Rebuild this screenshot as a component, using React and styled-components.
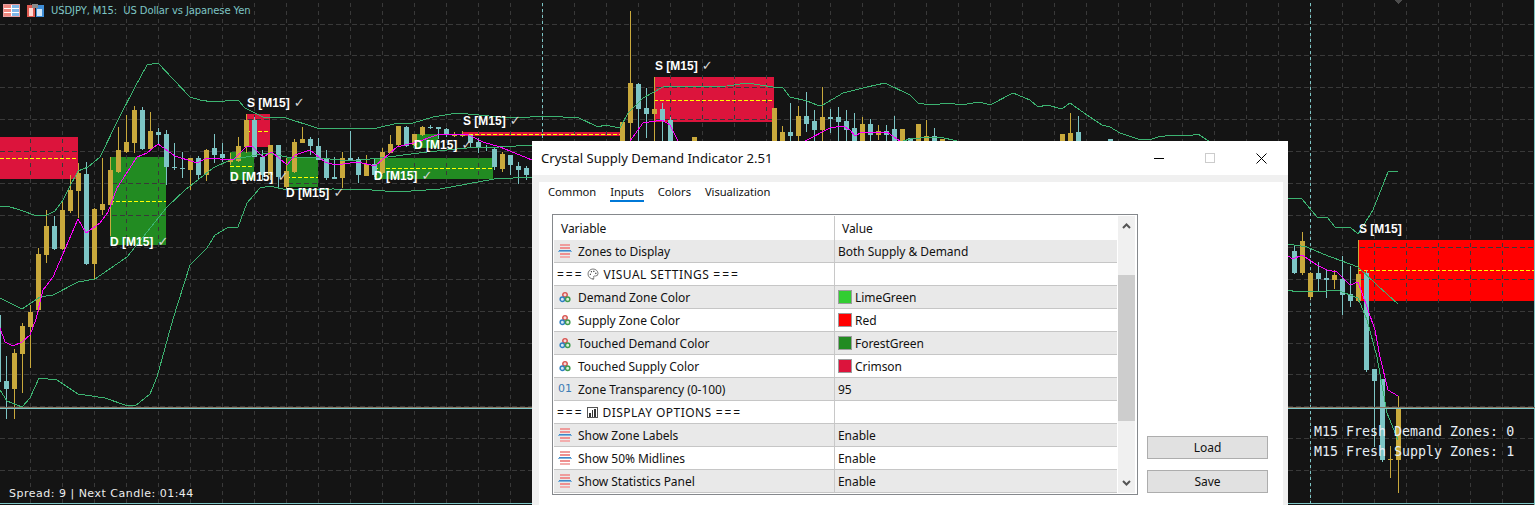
import React from "react";
import styled, {createGlobalStyle} from "styled-components";
import {Palette} from "lucide-react";

const GOLD = "#c9a93c";
const TEAL = "#7dc5c5";

const GRID_X = Array.from({length: 48}, (_, i) => 30 + i * 32);
const GRID_Y = [24, 55, 87, 119, 151, 183, 215, 247, 279, 311, 343, 374, 406, 438, 470];

// x, y, width, height, colour; the dashed midline sits at mid
const ZONES = [
  {x: 0, y: 137, w: 78, h: 42, mid: 158, c: "#dc143c"},
  {x: 110, y: 157, w: 56, h: 88, mid: 201, c: "#228b22"},
  {x: 246, y: 114, w: 24, h: 33, mid: 131, c: "#dc143c"},
  {x: 230, y: 152, w: 24, h: 28, mid: 166, c: "#228b22"},
  {x: 286, y: 157, w: 32, h: 30, mid: 177, c: "#228b22"},
  {x: 374, y: 158, w: 119, h: 21, mid: 168, c: "#228b22"},
  {x: 413, y: 134, w: 25, h: 14, c: "#228b22"},
  {x: 463, y: 132, w: 159, h: 4, mid: 134, c: "#dc143c"},
  {x: 654, y: 77, w: 120, h: 45, mid: 100, c: "#dc143c"},
  {x: 1358, y: 240, w: 177, h: 61, mid: 270, c: "#ff0000"},
];

// x, g(old) or t(eal), wick top, body top, body bottom, wick bottom
const CANDLES = [
  [-2, "t", 315, 315, 382, 382], [6, "t", 356, 381, 389, 419], [14, "g", 349, 353, 389, 419],
  [22, "g", 323, 326, 354, 393], [30, "g", 305, 312, 327, 368], [38, "g", 248, 254, 310, 312],
  [46, "g", 210, 226, 255, 263], [54, "t", 216, 226, 249, 250], [62, "g", 200, 210, 249, 250],
  [70, "g", 175, 190, 211, 213], [78, "g", 163, 173, 191, 218], [86, "t", 162, 174, 264, 265],
  [94, "g", 208, 209, 264, 279], [102, "g", 158, 204, 210, 215], [110, "g", 157, 170, 205, 236],
  [118, "g", 127, 150, 172, 173], [126, "g", 115, 142, 152, 153], [134, "g", 106, 110, 143, 153],
  [142, "t", 107, 110, 149, 150], [150, "g", 112, 131, 149, 150], [158, "t", 128, 132, 135, 145],
  [166, "t", 130, 134, 167, 185], [174, "t", 143, 167, 168, 170], [182, "t", 152, 168, 169, 178],
  [190, "g", 158, 158, 170, 190], [198, "t", 156, 158, 175, 180], [206, "g", 149, 150, 175, 181],
  [214, "t", 134, 148, 155, 163], [222, "t", 143, 154, 158, 162], [230, "g", 153, 159, 162, 165],
  [238, "g", 137, 146, 161, 162], [246, "g", 114, 120, 147, 153], [254, "t", 117, 120, 157, 157],
  [262, "t", 150, 157, 175, 180], [270, "g", 145, 145, 175, 180], [278, "t", 145, 145, 177, 188],
  [286, "g", 158, 171, 187, 190], [294, "g", 139, 142, 172, 173], [302, "g", 127, 139, 143, 143],
  [310, "t", 137, 139, 146, 155], [318, "t", 138, 146, 160, 160], [326, "t", 150, 158, 178, 180],
  [334, "t", 157, 177, 179, 179], [342, "g", 152, 158, 178, 188], [350, "t", 131, 158, 160, 161],
  [358, "t", 157, 159, 175, 183], [366, "g", 155, 164, 176, 176], [374, "t", 158, 164, 175, 177],
  [382, "g", 148, 152, 173, 174], [390, "g", 135, 144, 153, 153], [398, "g", 126, 126, 145, 147],
  [406, "t", 126, 127, 146, 147], [414, "g", 134, 134, 145, 146], [422, "g", 126, 127, 135, 136],
  [430, "t", 125, 127, 128, 129], [438, "t", 127, 127, 129, 139], [446, "t", 128, 129, 135, 137],
  [454, "g", 132, 134, 136, 137], [462, "g", 131, 134, 136, 137], [470, "t", 135, 135, 143, 148],
  [478, "t", 138, 142, 147, 153], [486, "t", 145, 147, 148, 151], [494, "t", 148, 149, 167, 170],
  [502, "g", 152, 154, 169, 172], [510, "t", 155, 155, 165, 175], [518, "t", 162, 166, 170, 184],
  [526, "t", 166, 168, 175, 180],
  [622, "g", 122, 122, 150, 150], [630, "g", 11, 83, 123, 150], [638, "t", 83, 84, 109, 150],
  [646, "t", 88, 108, 114, 138], [654, "g", 77, 109, 114, 150], [662, "t", 103, 109, 121, 150],
  [670, "t", 117, 120, 150, 150], [694, "g", 137, 137, 150, 150], [774, "g", 108, 108, 150, 150],
  [782, "g", 126, 132, 150, 150], [790, "t", 103, 132, 136, 150], [798, "g", 106, 116, 136, 150],
  [806, "t", 92, 116, 124, 132], [814, "t", 110, 121, 130, 150], [822, "g", 87, 117, 130, 150],
  [830, "t", 109, 117, 119, 133], [838, "t", 107, 117, 122, 150], [846, "t", 110, 121, 130, 150],
  [854, "t", 113, 128, 150, 150], [862, "g", 117, 124, 150, 150], [870, "t", 119, 124, 135, 150],
  [878, "g", 125, 131, 135, 140], [886, "t", 125, 131, 135, 150], [894, "t", 116, 129, 150, 150],
  [902, "g", 129, 129, 150, 150], [910, "t", 138, 138, 150, 150], [918, "g", 124, 124, 150, 150],
  [926, "g", 120, 136, 150, 150], [934, "t", 128, 136, 150, 150], [942, "g", 139, 139, 150, 150],
  [1062, "g", 134, 134, 150, 150], [1070, "g", 113, 133, 150, 150], [1078, "t", 116, 132, 150, 150],
  [1110, "t", 139, 139, 150, 150],
  [1294, "t", 245, 251, 273, 274], [1302, "g", 232, 241, 273, 275], [1310, "g", 272, 273, 297, 299],
  [1318, "t", 262, 273, 279, 292], [1326, "t", 270, 278, 280, 298], [1334, "g", 270, 275, 280, 289],
  [1342, "t", 256, 279, 295, 315], [1350, "t", 266, 294, 301, 307], [1358, "g", 240, 274, 301, 302],
  [1366, "t", 270, 273, 370, 372], [1374, "t", 369, 369, 381, 447], [1382, "t", 379, 379, 460, 462],
  [1390, "g", 446, 459, 460, 478], [1398, "g", 396, 408, 460, 493],
];

const BANDS = [
  "0,207 7,206 20,210 37,216 47,215 55,211 63,200 68,190 78,171 88,167 100,157 118,120 135,87 147,65 158,63 190,97 200,100 213,102 238,100 245,108 263,117 283,117 317,128 377,128 398,123 413,123 433,117 457,113 500,117 530,117 550,116 563,117 577,117 598,127 605,125 620,128 628,113 643,98 663,87 727,86 747,83 773,87 783,88 790,97 807,101 817,105 823,105 843,93 867,87 885,83 910,95 918,103 930,105 950,103 960,105 980,102 990,105 1013,93 1030,100 1038,107 1047,105 1062,109 1070,103 1087,115 1102,125 1110,127 1120,133 1138,139 1152,139 1158,137 1173,135 1193,135 1198,134 1207,140 1215,145",
  "1288,198 1302,199 1317,217 1327,217 1335,227 1350,227 1358,234 1373,210 1388,172 1398,171",
  "0,298 22,309 40,297 53,295 78,282 95,279 127,257 167,207 185,190 213,168 230,160 267,153 287,157 320,158 350,161 380,158 427,152 467,148 500,147 532,145",
  "903,141 910,139 930,137 940,137 957,141",
  "1288,244 1307,247 1323,254 1358,267 1377,285 1398,304",
  "0,390 7,401 22,407 30,398 39,378 57,380 78,394 105,398 125,405 135,406 150,394 157,377 173,319 190,265 207,248 215,235 227,228 238,227 247,203 260,188 270,186 287,190 333,189 372,190 397,192 440,189 494,179 532,177",
  "1288,290 1297,292 1327,291 1337,290 1358,298 1367,320 1377,357 1387,413 1398,440",
];

const AVERAGES = [
  "0,328 5,342 13,346 22,342 30,335 36,319 43,290 53,277 78,219 86,233 100,223 108,212 117,188 137,157 147,153 158,144 175,156 197,163 207,158 233,160 247,146 253,147 263,157 272,152 287,165 295,155 310,150 325,162 335,165 358,162 375,166 397,147 417,142 437,135 467,134 483,142 500,147 532,160",
  "630,141 643,123 662,120 670,125 678,141",
  "805,141 830,128 843,126 850,130 855,136 862,132 887,132 900,141",
  "1288,256 1293,259 1302,255 1317,265 1327,270 1337,272 1350,285 1358,282 1367,307 1375,330 1380,357 1388,390 1398,396",
];

const ZONE_LABELS = [
  {x: 247, y: 96, text: "S [M15]", tick: true},
  {x: 463, y: 114, text: "S [M15]", tick: true},
  {x: 655, y: 59, text: "S [M15]", tick: true},
  {x: 110, y: 235, text: "D [M15]", tick: true},
  {x: 230, y: 170, text: "D [M15]", tick: true},
  {x: 286, y: 186, text: "D [M15]", tick: true},
  {x: 374, y: 169, text: "D [M15]", tick: true},
  {x: 414, y: 138, text: "D [M15]", tick: true},
  {x: 1359, y: 222, text: "S [M15]"},
];

const INPUTS = [
  {icon: "enum", name: "Zones to Display", value: "Both Supply & Demand"},
  {section: "VISUAL SETTINGS", glyph: "palette"},
  {icon: "color", name: "Demand Zone Color", value: "LimeGreen", swatch: "#32cd32"},
  {icon: "color", name: "Supply Zone Color", value: "Red", swatch: "#ff0000"},
  {icon: "color", name: "Touched Demand Color", value: "ForestGreen", swatch: "#228b22"},
  {icon: "color", name: "Touched Supply Color", value: "Crimson", swatch: "#dc143c"},
  {icon: "number", name: "Zone Transparency (0-100)", value: "95"},
  {section: "DISPLAY OPTIONS", glyph: "bars"},
  {icon: "enum", name: "Show Zone Labels", value: "Enable"},
  {icon: "enum", name: "Show 50% Midlines", value: "Enable"},
  {icon: "enum", name: "Show Statistics Panel", value: "Enable"},
];

function ChartDrawing() {
  return (
    <ChartSvg width="1535" height="505" viewBox="0 0 1535 505">
      <g shapeRendering="crispEdges">
        {ZONES.map((z) => (
          <rect key={`${z.x}-${z.y}`} x={z.x} y={z.y} width={z.w} height={z.h} fill={z.c} />
        ))}
        {GRID_X.map((x) => (
          <line key={x} x1={x + 0.5} x2={x + 0.5} y1="3" y2="503" stroke="#393939" strokeDasharray="4 4" />
        ))}
        {GRID_Y.map((y) => (
          <line key={y} x1="0" x2="1535" y1={y + 0.5} y2={y + 0.5} stroke="#393939" strokeDasharray="5 3" />
        ))}
        {ZONES.filter((z) => z.mid).map((z) => (
          <line
            key={z.x}
            x1={z.x}
            x2={z.x + z.w}
            y1={z.mid + 0.5}
            y2={z.mid + 0.5}
            stroke="#ffff00"
            strokeDasharray="4 2"
          />
        ))}
        <line x1="542.5" x2="542.5" y1="3" y2="503" stroke={TEAL} strokeDasharray="3 3" />
        <line x1="1310.5" x2="1310.5" y1="3" y2="503" stroke={TEAL} strokeDasharray="3 3" />
        <line x1="1534.5" x2="1534.5" y1="0" y2="505" stroke={TEAL} />
        {CANDLES.map(([x, kind, wickTop, top, bottom, wickBottom]) => {
          const colour = kind === "g" ? GOLD : TEAL;
          return (
            <g key={x} fill={colour}>
              <rect x={x} y={wickTop} width="1" height={wickBottom - wickTop} />
              <rect x={x - 2} y={top} width="5" height={Math.max(bottom - top, 1)} />
            </g>
          );
        })}
        {BANDS.map((points) => (
          <polyline key={points} points={points} fill="none" stroke="#3cb371" />
        ))}
        {AVERAGES.map((points) => (
          <polyline key={points} points={points} fill="none" stroke="#ff00ff" />
        ))}
        <rect x="0" y="407" width="1535" height="1" fill="#8a7560" />
        <rect x="0" y="408" width="1535" height="1" fill={TEAL} />
        <rect x="0" y="503" width="1535" height="1" fill={TEAL} />
        <path d="M1394 0h8l-4 4z" fill="#4d4d4d" />
      </g>
    </ChartSvg>
  );
}

function TableIcon() {
  return (
    <svg width="17" height="13" viewBox="0 0 17 13" shapeRendering="crispEdges">
      <rect x="0.5" y="0.5" width="16" height="12" fill="#fff" stroke="#e8a0a0" />
      <rect x="1" y="1" width="7" height="11" fill="#f08a80" />
      <rect x="9" y="1" width="7" height="11" fill="#7fb8e8" />
      <path d="M1 4.5h15M1 8.5h15M8.5 1v11" stroke="#fff" />
    </svg>
  );
}

function SaveIcon() {
  return (
    <svg width="17" height="13" viewBox="0 0 17 13" shapeRendering="crispEdges">
      <rect x="0" y="1" width="8" height="12" fill="#e05a50" />
      <rect x="2" y="4" width="4" height="8" fill="#ffd9d2" />
      <rect x="9" y="1" width="8" height="12" fill="#3f8fd8" />
      <rect x="10" y="5" width="5" height="7" fill="#cfe6f8" />
      <rect x="5" y="0" width="6" height="4" fill="#8a8a8a" />
    </svg>
  );
}

function EnumIcon() {
  return (
    <svg width="14" height="14" viewBox="0 0 14 14" shapeRendering="crispEdges">
      <rect x="2" y="0" width="10" height="2" fill="#ee9c9c" />
      <rect x="2" y="3" width="10" height="2" fill="#ef8f8f" />
      <rect x="1" y="6" width="12" height="2" fill="#3d87c7" />
      <rect x="0" y="7" width="14" height="1" fill="#7fb3dc" />
      <rect x="2" y="9" width="10" height="2" fill="#ef8f8f" />
      <rect x="2" y="12" width="10" height="2" fill="#f2adad" />
    </svg>
  );
}

function ColorIcon() {
  return (
    <svg width="12" height="12" viewBox="0 0 14 14">
      <circle cx="7" cy="4.5" r="2.6" fill="#f6dada" stroke="#d9534f" strokeWidth="1.7" />
      <circle cx="3.9" cy="9.6" r="2.6" fill="#d8e8f5" stroke="#2f7fc1" strokeWidth="1.7" />
      <circle cx="10.1" cy="9.6" r="2.6" fill="#dcefdc" stroke="#3f9a4f" strokeWidth="1.7" />
    </svg>
  );
}

function BarsGlyph() {
  return (
    <svg width="11" height="11" viewBox="0 0 11 11" shapeRendering="crispEdges">
      <rect x="0.5" y="0.5" width="10" height="10" fill="none" stroke="#555" />
      <rect x="2" y="6" width="2" height="4" fill="#333" />
      <rect x="5" y="3" width="1" height="7" fill="#333" />
      <rect x="7" y="2" width="2" height="8" fill="#333" />
    </svg>
  );
}

function RowIcon({kind}) {
  if (kind === "enum") return <EnumIcon />;
  if (kind === "color") return <ColorIcon />;
  return <NumberMark>01</NumberMark>;
}

function InputRow({input, index}) {
  if (input.section) {
    return (
      <Row $shaded={index % 2 === 0}>
        <NameCell $section>
          <Rule>===</Rule>
          <Glyph>{input.glyph === "palette" ? <Palette size={12} strokeWidth={1.3} color="#333" /> : <BarsGlyph />}</Glyph>
          <SectionName>{input.section}</SectionName>
          <Rule>===</Rule>
        </NameCell>
        <ValueCell />
      </Row>
    );
  }
  return (
    <Row $shaded={index % 2 === 0}>
      <NameCell>
        <IconSlot>
          <RowIcon kind={input.icon} />
        </IconSlot>
        {input.name}
      </NameCell>
      <ValueCell>
        {input.swatch && <Swatch $colour={input.swatch} />}
        {input.value}
      </ValueCell>
    </Row>
  );
}

export default function App() {
  return (
    <>
      <GlobalStyle />
      <Terminal>
        <ChartDrawing />
        <ChartTitle>
          <TableIcon />
          <SaveIcon />
          <SymbolName>{"USDJPY, M15:  US Dollar vs Japanese Yen"}</SymbolName>
        </ChartTitle>
        {ZONE_LABELS.map((label) => (
          <ZoneLabel key={`${label.x}-${label.y}`} $x={label.x} $y={label.y}>
            {label.text}
            {label.tick && <Tick> ✓</Tick>}
          </ZoneLabel>
        ))}
        <SpreadInfo>Spread: 9 | Next Candle: 01:44</SpreadInfo>
        <Stats>
          <div>M15 Fresh Demand Zones: 0</div>
          <div>M15 Fresh Supply Zones: 1</div>
        </Stats>

        <Dialog>
          <TitleBar>
            <DialogTitle>Crystal Supply Demand Indicator 2.51</DialogTitle>
            <WindowControls>
              <svg width="10" height="10" viewBox="0 0 10 10" shapeRendering="crispEdges">
                <path d="M0 5.5h10" stroke="#000" />
              </svg>
              <svg width="10" height="10" viewBox="0 0 10 10" shapeRendering="crispEdges">
                <rect x="0.5" y="0.5" width="9" height="9" fill="none" stroke="#ccc" />
              </svg>
              <svg width="11" height="11" viewBox="0 0 11 11">
                <path d="M0.5 0.5l10 10M10.5 0.5l-10 10" stroke="#000" strokeWidth="1" />
              </svg>
            </WindowControls>
          </TitleBar>
          <DialogBody>
            <Pane>
              <Tabs>
                <Tab>Common</Tab>
                <Tab $active>Inputs</Tab>
                <Tab>Colors</Tab>
                <Tab>Visualization</Tab>
              </Tabs>
              <Content>
                <InputTable>
                  <Rows>
                    <HeaderRow>
                      <HeaderCell>Variable</HeaderCell>
                      <HeaderCell>Value</HeaderCell>
                    </HeaderRow>
                    {INPUTS.map((input, index) => (
                      <InputRow key={input.name || input.section} input={input} index={index} />
                    ))}
                  </Rows>
                  <Scrollbar>
                    <ScrollArrow>
                      <svg width="9" height="6" viewBox="0 0 9 6">
                        <path d="M1 5l3.5-3.5L8 5" fill="none" stroke="#555" strokeWidth="2" />
                      </svg>
                    </ScrollArrow>
                    <ScrollThumb />
                    <ScrollArrow $end>
                      <svg width="9" height="6" viewBox="0 0 9 6">
                        <path d="M1 1l3.5 3.5L8 1" fill="none" stroke="#555" strokeWidth="2" />
                      </svg>
                    </ScrollArrow>
                  </Scrollbar>
                </InputTable>
                <SideButtons>
                  <DialogButton>Load</DialogButton>
                  <DialogButton>Save</DialogButton>
                </SideButtons>
              </Content>
            </Pane>
          </DialogBody>
        </Dialog>
      </Terminal>
    </>
  );
}

const GlobalStyle = createGlobalStyle`
  html, body {
    margin: 0;
    padding: 0;
    background: #141414;
  }
`;

const Terminal = styled.div`
  position: relative;
  width: 1535px;
  height: 505px;
  overflow: hidden;
  background: #141414;
`;

const ChartSvg = styled.svg`
  position: absolute;
  top: 0;
  left: 0;
  display: block;
`;

const ChartTitle = styled.div`
  position: absolute;
  top: 3px;
  left: 3px;
  display: flex;
  align-items: center;
  gap: 7px;
  height: 14px;
`;

const SymbolName = styled.span`
  padding-top: 1px;
  font: 10px "DejaVu Sans", sans-serif;
  letter-spacing: -0.1px;
  color: ${TEAL};
  white-space: pre;
`;

const ZoneLabel = styled.span`
  position: absolute;
  left: ${(p) => p.$x}px;
  top: ${(p) => p.$y}px;
  font: bold 12px/14px "Liberation Sans", sans-serif;
  color: #fff;
  white-space: pre;
`;

const Tick = styled.span`
  font: 13px/14px "DejaVu Sans", sans-serif;
  color: #d8d8d8;
`;

const SpreadInfo = styled.div`
  position: absolute;
  left: 9px;
  top: 486px;
  font: 11px/15px "DejaVu Sans", sans-serif;
  letter-spacing: 0.5px;
  color: #ececec;
`;

const Stats = styled.div`
  position: absolute;
  left: 1314px;
  top: 424px;
  display: flex;
  flex-direction: column;
  gap: 4px;
  font: 13.3px/16px "DejaVu Sans Mono", monospace;
  color: #e6eef5;
  white-space: pre;
`;

const Dialog = styled.div`
  position: absolute;
  left: 532px;
  top: 141px;
  width: 756px;
  height: 364px;
  display: flex;
  flex-direction: column;
  background: #f0f0f0;
  font: 12px/16px "Noto Sans", sans-serif;
  letter-spacing: -0.05px;
  color: #111;
`;

const TitleBar = styled.div`
  display: flex;
  align-items: center;
  justify-content: space-between;
  height: 34px;
  padding: 0 21px 0 9px;
  background: #fff;
`;

const DialogTitle = styled.span`
  font-size: 13.1px;
  letter-spacing: 0;
`;

const WindowControls = styled.div`
  display: flex;
  align-items: center;
  gap: 41px;
`;

const DialogBody = styled.div`
  flex: 1;
  display: flex;
  min-height: 0;
  padding: 7px 5px 0 7px;
`;

const Pane = styled.div`
  flex: 1;
  display: flex;
  flex-direction: column;
  background: #fff;
`;

const Tabs = styled.div`
  display: flex;
  gap: 14px;
  height: 21px;
  padding-left: 9px;
  font-size: 11.2px;
`;

const Tab = styled.div`
  height: 20px;
  padding-top: 2px;
  box-sizing: border-box;
  border-bottom: 2px solid ${(p) => (p.$active ? "#0078d7" : "transparent")};
`;

const Content = styled.div`
  display: flex;
  align-items: flex-start;
  gap: 9px;
  margin-top: 11px;
  padding-left: 13px;
`;

const InputTable = styled.div`
  display: flex;
  width: 586px;
  height: 281px;
  box-sizing: border-box;
  padding: 1px 2px 1px 1px;
  border: 1px solid #85888c;
`;

const Rows = styled.div`
  width: 564px;
  display: flex;
  flex-direction: column;
`;

const HeaderRow = styled.div`
  display: grid;
  grid-template-columns: 280px 1fr;
  height: 24px;
`;

const HeaderCell = styled.div`
  display: flex;
  align-items: center;
  padding: 2px 0 0 7px;
  & + & {
    border-left: 1px solid #c8c8c8;
  }
`;

const Row = styled.div`
  display: grid;
  grid-template-columns: 280px 1fr;
  height: 23px;
  box-sizing: border-box;
  border-bottom: 1px solid #c6c6c6;
  background: ${(p) => (p.$shaded ? "#e9e9e9" : "#fff")};
`;

const NameCell = styled.div`
  display: flex;
  align-items: center;
  padding: 2px 0 0 ${(p) => (p.$section ? "3px" : "4px")};
  white-space: pre;
`;

const Rule = styled.span`
  letter-spacing: 2px;
`;

const Glyph = styled.span`
  display: flex;
  margin: -2px 5px 0 3px;
`;

const SectionName = styled.span`
  margin-right: 4px;
  letter-spacing: 0.45px;
`;

const IconSlot = styled.span`
  display: flex;
  justify-content: center;
  width: 14px;
  margin: -2px 6px 0 0;
`;

const NumberMark = styled.span`
  font: 11px/14px "DejaVu Sans", sans-serif;
  color: #3b7cb5;
`;

const ValueCell = styled.div`
  display: flex;
  align-items: center;
  padding: 2px 0 0 3px;
  border-left: 1px solid #c8c8c8;
`;

const Swatch = styled.span`
  width: 14px;
  height: 14px;
  margin: -2px 3px 0 0;
  box-sizing: border-box;
  border: 1px solid #9c9c9c;
  background: ${(p) => p.$colour};
`;

const Scrollbar = styled.div`
  width: 17px;
  margin-left: 1px;
  display: flex;
  flex-direction: column;
  background: #f0f0f0;
`;

const ScrollArrow = styled.div`
  display: flex;
  align-items: center;
  justify-content: center;
  height: 20px;
  margin-top: ${(p) => (p.$end ? "auto" : "0")};
`;

const ScrollThumb = styled.div`
  height: 146px;
  margin-top: 39px;
  background: #cdcdcd;
`;

const SideButtons = styled.div`
  display: flex;
  flex-direction: column;
  gap: 11px;
  width: 121px;
  padding-top: 222px;
`;

const DialogButton = styled.div`
  display: flex;
  align-items: center;
  justify-content: center;
  height: 23px;
  box-sizing: border-box;
  border: 1px solid #adadad;
  background: #e1e1e1;
`;
